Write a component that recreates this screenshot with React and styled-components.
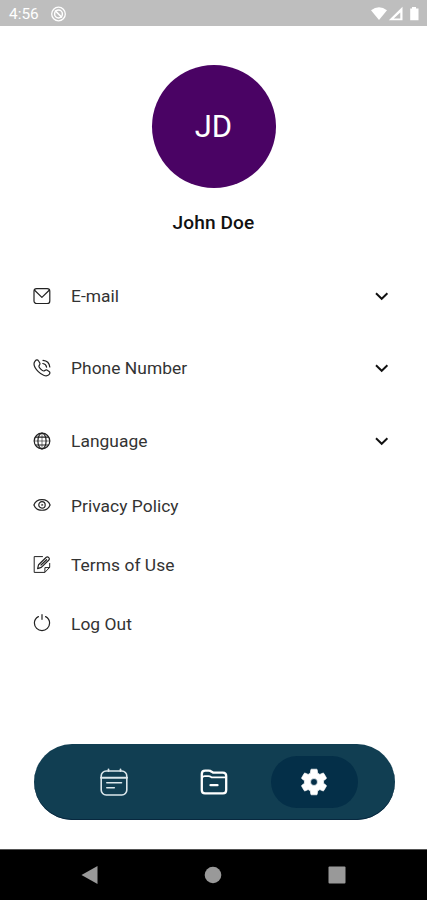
import React from "react";
import styled, { createGlobalStyle } from "styled-components";

const GlobalStyle = createGlobalStyle`
  * { box-sizing: border-box; }
  body { margin: 0; background: #fff; font-family: Roboto, "Liberation Sans", sans-serif; }
`;

const Screen = styled.div`
  display: flex;
  flex-direction: column;
  width: 100%;
  height: 900px;
  overflow: hidden;
  background: #fff;
`;

const StatusBar = styled.header`
  display: flex;
  align-items: center;
  height: 26px;
  padding: 2px 8px 0 9px;
  background: #bebebe;
  color: #fff;
`;

const Clock = styled.span`
  width: 41px;
  font-size: 15.4px;
  line-height: 18px;
`;

const StatusIcons = styled.div`
  display: flex;
  align-items: center;
  margin-left: auto;
`;

const Profile = styled.section`
  display: flex;
  flex-direction: column;
  align-items: center;
  padding-top: 38.5px;
  height: 234px;
`;

const Avatar = styled.div`
  display: flex;
  align-items: center;
  justify-content: center;
  width: 124px;
  height: 123.5px;
  padding-top: 1px;
  border-radius: 50%;
  background: #4a0364;
  color: #fff;
  font-size: 31px;
  line-height: 36px;
`;

const Name = styled.h1`
  margin: 23.4px 0 0;
  color: #111;
  font-size: 19.1px;
  line-height: 24px;
  font-weight: 500;
  letter-spacing: 0.1px;
`;

const Menu = styled.nav`
  display: flex;
  flex-direction: column;
  padding: 0 37px 0 32px;
`;

const Row = styled.div`
  display: flex;
  align-items: center;
  height: ${(p) => (p.$expandable ? 72.3 : 59)}px;
  color: #333;
`;

const RowIcon = styled.span`
  display: flex;
  width: 39px;
  color: #222;
`;

const RowLabel = styled.span`
  flex: 1;
  font-size: 17.4px;
  line-height: 22px;
  letter-spacing: 0.04px;
`;

const TabBar = styled.footer`
  display: flex;
  align-items: center;
  justify-content: space-between;
  width: 361px;
  height: 76px;
  margin: auto auto 29px 33.5px;
  padding: 0 37px;
  border-radius: 38px;
  background: #113e52;
  box-shadow: inset 0 -1px 0 #08283f;
`;

const Tab = styled.div`
  display: flex;
  align-items: center;
  justify-content: center;
  width: 87px;
  height: 52px;
  border-radius: 26px;
  color: #fff;
  background: ${(p) => (p.$active ? "#042f48" : "transparent")};
`;

const SystemNav = styled.div`
  display: flex;
  align-items: center;
  justify-content: space-between;
  height: 51px;
  padding: 0 80.6px 0 80.4px;
  border-top: 1px solid #555;
  background: #000;
  color: #999;
`;

const Svg = ({ size = 20, w = 1.2, children }) => (
  <svg width={size} height={size} viewBox="0 0 20 20" fill="none" stroke="currentColor"
    strokeWidth={w} strokeLinecap="round" strokeLinejoin="round">
    {children}
  </svg>
);

const MailIcon = () => (
  <Svg>
    <rect x="2" y="2.7" width="15.8" height="14.8" rx="2.6" />
    <path d="M2.6 4.2 L9.9 11.4 L17.2 4.2" />
  </Svg>
);

const PhoneIcon = () => (
  <Svg>
    <path d="M3.1 3.1 C4.3 1.6 5.7 1.6 6.6 3 L7.8 5 C8.5 6.2 7.2 7.1 6.9 8.1 C6.7 9.4 10.4 13.2 11.8 13 C12.8 12.8 13.7 11.4 14.9 12.1 L17.1 13.4 C18.4 14.3 18 15.7 16.7 16.9 C14.1 19.2 9.2 16.6 6.3 13.7 C3.2 10.5 0.7 6 3.1 3.1 Z" />
    <path d="M11 2.3 C15 2.6 17.4 5 17.8 9 M10.8 5.5 C13 5.8 14.2 7 14.6 9.2" />
  </Svg>
);

const GlobeIcon = () => (
  <Svg>
    <circle cx="10" cy="10" r="7.8" />
    <ellipse cx="10" cy="10" rx="4.1" ry="7.8" />
    <path d="M3.4 6.1 H16.6 M3.4 14 H16.6" />
    <path d="M10 2.2 V17.8 M2.2 10 H17.8" strokeWidth="0.6" />
  </Svg>
);

const EyeIcon = () => (
  <Svg>
    <path d="M1.9 9 C4.5 1.7 15.5 1.7 18.1 9 C15.5 16 4.5 16 1.9 9 Z" />
    <circle cx="10" cy="8.9" r="3.2" />
    <circle cx="10" cy="8.9" r="0.7" strokeWidth="0.6" />
  </Svg>
);

const EditIcon = () => (
  <Svg>
    <path d="M10.5 1.6 H2.2 V17.4 H12.9 L17.7 12.3 V8.4 M12.9 17 V12.6 H17.5" strokeWidth="1" />
    <path d="M5.6 13.6 L6.6 9.7 L14.3 2.3 Q15.5 1.4 16.8 2.6 Q18 3.9 16.9 5 L9.3 12.4 Z M9 10 L14.6 4.7" strokeWidth="1.2" />
  </Svg>
);

const PowerIcon = () => (
  <Svg>
    <path d="M6.4 2.6 C4 3.9 2.4 6.3 2.4 9 A7.6 7.6 0 0 0 17.6 9 C17.6 6.3 16 3.9 13.6 2.6 M10 0.7 V5.3" />
  </Svg>
);

const Chevron = () => (
  <svg width="16" height="10" viewBox="0 0 16 10" fill="none" stroke="#111" strokeWidth="1.9">
    <path d="M2 2.2 L7.7 7.8 L13.4 2.2" />
  </svg>
);

const CalendarIcon = () => (
  <svg width="30" height="30" viewBox="0 0 30 30" fill="none" stroke="#dce7ec" strokeWidth="1.6" strokeLinecap="round">
    <rect x="2.2" y="4" width="25.6" height="24" rx="5" />
    <path d="M2 10.8 H28" strokeWidth="2" />
    <path d="M9.5 2.4 V4 M21.5 2.4 V4" strokeWidth="1.8" />
    <path d="M7.8 15.8 H22.5 M7.8 20.8 H15.3" />
  </svg>
);

const FolderIcon = () => (
  <svg width="30" height="30" viewBox="0 0 30 30" fill="none" stroke="#fff" strokeWidth="2.3" strokeLinecap="round" strokeLinejoin="round">
    <path d="M2.8 23 V7 Q2.8 3.7 6.2 3.7 H9.5 Q11.5 3.7 12.7 4.8 L14 5.6 H23.8 Q27.2 5.6 27.2 9 V23 Q27.2 26.4 24 26.4 H6 Q2.8 26.4 2.8 23 Z" />
    <path d="M3 11 Q3.8 9.2 5.8 9.2 H9.5 Q11 9.2 12 9.9 L12.6 10.4 H27" strokeWidth="1.8" />
    <path d="M11.5 18.2 H18.5" />
  </svg>
);

const GearIcon = () => (
  <svg width="32" height="32" viewBox="0 0 24 24" fill="#fff" stroke="#fff" strokeWidth="0.5">
    <path d="M19.14 12.94c.04-.3.06-.61.06-.94 0-.32-.02-.64-.07-.94l2.03-1.58a.49.49 0 0 0 .12-.61l-1.92-3.32a.488.488 0 0 0-.59-.22l-2.39.96c-.5-.38-1.03-.7-1.62-.94l-.36-2.54a.484.484 0 0 0-.48-.41h-3.84c-.24 0-.43.17-.47.41l-.36 2.54c-.59.24-1.13.57-1.62.94l-2.39-.96c-.22-.08-.47 0-.59.22L2.74 8.87c-.12.21-.08.47.12.61l2.03 1.58c-.05.3-.09.63-.09.94s.02.64.07.94l-2.03 1.58a.49.49 0 0 0-.12.61l1.92 3.32c.12.22.37.29.59.22l2.39-.96c.5.38 1.03.7 1.62.94l.36 2.54c.05.24.24.41.48.41h3.84c.24 0 .44-.17.47-.41l.36-2.54c.59-.24 1.13-.56 1.62-.94l2.39.96c.22.08.47 0 .59-.22l1.92-3.32c.12-.22.07-.47-.12-.61zM12 14.6a2.6 2.6 0 1 1 0-5.2 2.6 2.6 0 0 1 0 5.2z" />
  </svg>
);

const items = [
  { label: "E-mail", Icon: MailIcon, expandable: true },
  { label: "Phone Number", Icon: PhoneIcon, expandable: true },
  { label: "Language", Icon: GlobeIcon, expandable: true },
  { label: "Privacy Policy", Icon: EyeIcon },
  { label: "Terms of Use", Icon: EditIcon },
  { label: "Log Out", Icon: PowerIcon },
];

export default function App() {
  return (
    <Screen>
      <GlobalStyle />
      <StatusBar>
        <Clock>4:56</Clock>
        <svg width="17" height="17" viewBox="0 0 17 17" fill="none" stroke="#fff">
          <circle cx="8.5" cy="8" r="6.8" strokeWidth="1.3" />
          <circle cx="8.5" cy="8" r="3.9" strokeWidth="1.5" />
          <path d="M5 4.5 L12 11.5" strokeWidth="1.7" />
        </svg>
        <StatusIcons>
          <svg width="48" height="16" viewBox="0 0 48 16" fill="#fff">
            <path d="M0 4.3 Q8 -1.9 16 4.3 L8 14 Z" />
            <path d="M31.5 0.8 V14.2 H17.8 Z M29.3 6.6 L22.8 12.6 H29.3 Z" fillRule="evenodd" />
            <path d="M41 1 H45 V2.4 H47.5 V14.3 H39.2 V2.4 H41 Z" />
          </svg>
        </StatusIcons>
      </StatusBar>
      <Profile>
        <Avatar>JD</Avatar>
        <Name>John Doe</Name>
      </Profile>
      <Menu>
        {items.map(({ label, Icon, expandable }) => (
          <Row key={label} $expandable={expandable}>
            <RowIcon><Icon /></RowIcon>
            <RowLabel>{label}</RowLabel>
            {expandable && <Chevron />}
          </Row>
        ))}
      </Menu>
      <TabBar>
        <Tab><CalendarIcon /></Tab>
        <Tab><FolderIcon /></Tab>
        <Tab $active><GearIcon /></Tab>
      </TabBar>
      <SystemNav>
        <svg width="18" height="20" viewBox="0 0 18 20" fill="currentColor"><path d="M1.5 10 L17.5 1 V19 Z" /></svg>
        <svg width="18" height="18" viewBox="0 0 18 18" fill="currentColor"><circle cx="9" cy="9" r="8.3" /></svg>
        <svg width="18" height="18" viewBox="0 0 18 18" fill="currentColor"><rect x="0.5" y="0.5" width="17" height="17" rx="1" /></svg>
      </SystemNav>
    </Screen>
  );
}
